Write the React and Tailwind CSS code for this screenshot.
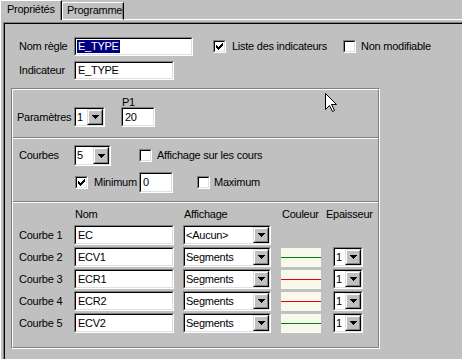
import React from 'react';

const Arrow = () => (
  <svg width="7" height="4" viewBox="0 0 7 4" shapeRendering="crispEdges">
    <path d="M0 0H7V1H6V2H5V3H4V4H3V3H2V2H1V1H0Z" fill="#000" />
  </svg>
);

function Sunken({ className = '', inner = 'bg-white', children }) {
  return (
    <div className={`shrink-0 border border-t-[#808080] border-l-[#808080] border-r-white border-b-white ${className}`}>
      <div className={`h-full w-full border border-t-black border-l-black border-r-[#dfdfdf] border-b-[#dfdfdf] ${inner}`}>
        {children}
      </div>
    </div>
  );
}

function DropBtn() {
  return (
    <div className="h-full w-[16px] shrink-0 border border-t-[#dfdfdf] border-l-[#dfdfdf] border-r-black border-b-black">
      <div className="flex h-full w-full items-center justify-center border border-t-white border-l-white border-r-[#808080] border-b-[#808080] bg-[#c0c0c0]">
        <Arrow />
      </div>
    </div>
  );
}

function Select({ className, value }) {
  return (
    <Sunken className={className} inner="bg-white flex">
      <div className="flex flex-1 items-center overflow-hidden whitespace-nowrap pl-[1px]">{value}</div>
      <DropBtn />
    </Sunken>
  );
}

function Input({ className, children }) {
  return (
    <Sunken className={className} inner="bg-white flex items-center pl-[2px] whitespace-nowrap">
      {children}
    </Sunken>
  );
}

function Check({ checked }) {
  return (
    <div className="h-[13px] w-[13px] shrink-0 border border-t-[#808080] border-l-[#808080] border-r-white border-b-white">
      <div className="flex h-full w-full items-center justify-center border border-t-black border-l-black border-r-[#dfdfdf] border-b-[#dfdfdf] bg-white">
        {checked && (
          <svg width="7" height="7" viewBox="0 0 7 7" shapeRendering="crispEdges">
            <path
              d="M6 0h1v1h-1z M5 1h2v1h-2z M0 2h1v1h-1z M4 2h3v1h-3z M0 3h2v1h-2z M3 3h3v1h-3z M0 4h5v1h-5z M1 5h3v1h-3z M2 6h1v1h-1z"
              fill="#000"
            />
          </svg>
        )}
      </div>
    </div>
  );
}

function Swatch({ red }) {
  return (
    <div className="h-[19px] w-[40px] shrink-0 bg-[#f8f8ec] pt-[9px]">
      <div className={red ? 'h-[1px] w-full bg-[#e80000]' : 'h-[1px] w-full bg-[#008000]'} />
    </div>
  );
}

const rows = [
  { n: 'Courbe 1', nom: 'EC', aff: '<Aucun>', swatch: false, red: false },
  { n: 'Courbe 2', nom: 'ECV1', aff: 'Segments', swatch: true, red: false },
  { n: 'Courbe 3', nom: 'ECR1', aff: 'Segments', swatch: true, red: true },
  { n: 'Courbe 4', nom: 'ECR2', aff: 'Segments', swatch: true, red: true },
  { n: 'Courbe 5', nom: 'ECV2', aff: 'Segments', swatch: true, red: false },
];

export default function App() {
  return (
    <div className="relative h-[359px] w-[462px] overflow-hidden bg-[#c0c0c0] font-[family-name:'Liberation_Sans',Arial,sans-serif] text-[11px] leading-[13px] tracking-[-0.25px] text-black">
      {/* Tabs */}
      <div className="flex h-[20px] items-end">
        <div className="h-[20px] w-[62px] shrink-0 whitespace-nowrap border-l border-t border-r border-l-white border-t-white border-r-black pl-[6px] pt-[2px] shadow-[inset_-1px_0_0_#808080]">
          Propriétés
        </div>
        <div className="h-[18px] w-[62px] shrink-0 whitespace-nowrap border-l border-t border-r border-b border-l-white border-t-white border-r-black border-b-white pl-[4px] pt-[1px] shadow-[inset_-1px_0_0_#808080]">
          Programme
        </div>
        <div className="h-[1px] flex-1 bg-white" />
      </div>

      {/* Panel */}
      <div className="border-l border-white pl-[2px] pt-[2px]">
        <div className="border-l border-t border-[#808080]">
          <div className="h-[340px] border-l border-t border-black pl-[14px] pt-[13px]">
            {/* Row 1 */}
            <div className="flex h-[19px] items-center">
              <div className="w-[55px] shrink-0">Nom règle</div>
              <Input className="h-[19px] w-[119px]">
                <span className="-ml-[1px] bg-[#000080] pl-[1px] pr-[1px] text-white">E_TYPE</span>
              </Input>
              <div className="ml-[20px] flex w-[130px] shrink-0 items-center">
                <Check checked />
                <span className="ml-[6px] whitespace-nowrap">Liste des indicateurs</span>
              </div>
              <div className="flex shrink-0 items-center">
                <Check />
                <span className="ml-[5px] whitespace-nowrap">Non modifiable</span>
              </div>
            </div>
            {/* Row 2 */}
            <div className="mt-[5px] flex h-[19px] items-center">
              <div className="w-[55px] shrink-0">Indicateur</div>
              <Input className="h-[19px] w-[100px]">E_TYPE</Input>
            </div>

            {/* Group box */}
            <div className="-ml-[8px] mt-[8px] h-[261px] w-[369px] border border-t-[#808080] border-l-[#808080] border-r-white border-b-white">
              <div className="flex h-full w-full flex-col border border-t-white border-l-white border-r-[#808080] border-b-[#808080]">
                {/* Section 1 */}
                <div className="h-[47px] shrink-0 pl-[4px] pt-[7px]">
                  <div className="ml-[105px] h-[10px] leading-[10px]">P1</div>
                  <div className="flex h-[20px] items-center">
                    <div className="w-[57px] shrink-0 whitespace-nowrap">Paramètres</div>
                    <Select className="h-[20px] w-[31px]" value="1" />
                    <Input className="ml-[16px] h-[20px] w-[34px]">20</Input>
                  </div>
                </div>
                <div className="h-[2px] shrink-0 border-t border-b border-t-[#808080] border-b-white" />

                {/* Section 2 */}
                <div className="h-[62px] shrink-0 pl-[6px] pt-[6px]">
                  <div className="flex h-[21px] items-center">
                    <div className="w-[55px] shrink-0">Courbes</div>
                    <Select className="h-[21px] w-[37px]" value="5" />
                    <div className="ml-[28px]">
                      <Check />
                    </div>
                    <span className="ml-[5px] whitespace-nowrap">Affichage sur les cours</span>
                  </div>
                  <div className="mt-[6px] flex h-[21px] items-center">
                    <div className="ml-[56px]">
                      <Check checked />
                    </div>
                    <span className="ml-[6px] w-[45px] shrink-0">Minimum</span>
                    <Input className="h-[21px] w-[34px]">0</Input>
                    <div className="ml-[24px]">
                      <Check />
                    </div>
                    <span className="ml-[4px]">Maximum</span>
                  </div>
                </div>
                <div className="h-[2px] shrink-0 border-t border-b border-t-[#808080] border-b-white" />

                {/* Section 3 */}
                <div className="flex-1 pl-[6px] pt-[5px]">
                  <div className="flex h-[13px]">
                    <div className="ml-[56px] w-[109px] shrink-0">Nom</div>
                    <div className="w-[98px] shrink-0">Affichage</div>
                    <div className="w-[44px] shrink-0">Couleur</div>
                    <div className="shrink-0">Epaisseur</div>
                  </div>
                  <div className="mt-[4px] flex flex-col gap-[2px]">
                    {rows.map((r) => (
                      <div key={r.n} className="flex h-[20px] items-center">
                        <div className="w-[55px] shrink-0">{r.n}</div>
                        <Input className="h-[20px] w-[100px]">{r.nom}</Input>
                        <Select className="ml-[9px] h-[20px] w-[88px]" value={r.aff} />
                        {r.swatch && (
                          <>
                            <div className="ml-[10px]">
                              <Swatch red={r.red} />
                            </div>
                            <Select className="ml-[12px] h-[20px] w-[30px]" value="1" />
                          </>
                        )}
                      </div>
                    ))}
                  </div>
                </div>
              </div>
            </div>
          </div>
        </div>
      </div>

      {/* Mouse cursor */}
      <svg className="absolute left-[325px] top-[93px]" width="12" height="20" viewBox="0 0 12 20">
        <path d="M0.5 0.5 L0.5 16.5 L4.5 12.5 L7.5 18.5 L9.5 17.5 L6.5 11.5 L11.5 11.5 Z" fill="#fff" stroke="#000" strokeWidth="1" />
      </svg>
    </div>
  );
}
